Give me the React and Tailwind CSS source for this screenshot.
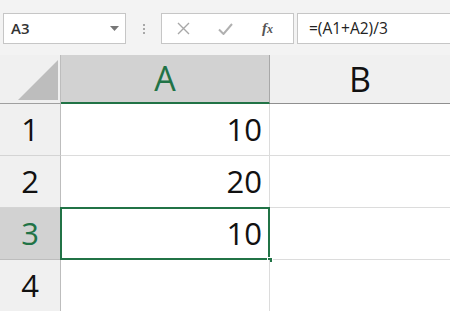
const rows = [
  { n: 1, a: '10' },
  { n: 2, a: '20' },
  { n: 3, a: '10', selected: true },
  { n: 4, a: '' },
];

export default function App() {
  return (
    <div className="w-[450px] h-[311px] overflow-hidden bg-[#f3f3f3] flex flex-col" style={{ fontFamily: '"Open Sans", "Noto Sans", sans-serif' }}>
      {/* formula bar */}
      <div className="h-[55px] flex items-start pt-[13px] pl-[3px] shrink-0">
        <div className="w-[123px] h-[31px] bg-white border border-[#c6c6c6] flex items-center pl-[7px] pr-[6px]">
          <span className="flex-1 text-[15px] font-semibold text-[#333]">A3</span>
          <svg width="9" height="5" viewBox="0 0 9 5"><path d="M0 0h9L4.5 5z" fill="#777" /></svg>
        </div>
        <div className="w-[35px] flex flex-col items-center justify-center h-[31px] gap-[2px]">
          <span className="w-[2px] h-[2px] bg-[#a8a8a8]" />
          <span className="w-[2px] h-[2px] bg-[#a8a8a8]" />
          <span className="w-[2px] h-[2px] bg-[#a8a8a8]" />
        </div>
        <div className="w-[133px] h-[31px] bg-white border border-[#c6c6c6] flex items-center pl-[15px]">
          <svg width="13" height="13" viewBox="0 0 13 13"><path d="M1 1l11 11M12 1L1 12" stroke="#a8a8a8" strokeWidth="1.4" /></svg>
          <svg className="ml-[28px]" width="15" height="12" viewBox="0 0 15 12"><path d="M1 6.5l4.5 4.5 8.5-10" stroke="#b0b0b0" strokeWidth="2" fill="none" /></svg>
          <span className="ml-[29px] text-[15px] italic font-semibold text-[#555]" style={{ fontFamily: '"Liberation Serif", serif' }}>f<span className="text-[12px]">x</span></span>
        </div>
        <div className="flex-1 h-[31px] bg-white border border-[#c6c6c6] border-r-0 ml-[3px] flex items-center pl-[11px] text-[15.5px] text-[#222]">
          =(A1+A2)/3
        </div>
      </div>

      {/* header row */}
      <div className="flex h-[49px] shrink-0">
        <div className="w-[61px] bg-[#f0f0f0] border-r border-[#bdbdbd] border-b border-b-[#a0a0a0] relative">
          <svg className="absolute left-[18px] top-[5px]" width="40" height="40" viewBox="0 0 40 40"><path d="M40 0V40H0z" fill="#bdbdbd" /></svg>
        </div>
        <div className="w-[209px] bg-[#d2d2d2] border-r border-[#a8a8a8] border-b-2 border-b-[#217346] flex items-center justify-center text-[34px] text-[#217346]">
          A
        </div>
        <div className="flex-1 bg-[#f0f0f0] border-b border-[#8f8f8f] flex items-center justify-center text-[34px] text-[#111]">
          B
        </div>
      </div>

      {rows.map((r) => (
        <div key={r.n} className="flex h-[52px] shrink-0">
          <div
            className={
              r.selected
                ? 'w-[61px] bg-[#d2d2d2] border-r border-[#a8a8a8] border-b border-b-[#bdbdbd] flex items-center justify-center text-[31px] text-[#217346]'
                : 'w-[61px] bg-[#f0f0f0] border-r border-[#bdbdbd] border-b border-b-[#d4d4d4] flex items-center justify-center text-[31px] text-[#111]'
            }
          >
            {r.n}
          </div>
          <div className="w-[209px] bg-white border-r border-b border-[#dcdcdc] relative flex items-center justify-end pr-[7px] text-[31px] text-[#111]">
            {r.a}
            {r.selected && (
              <>
                <div className="absolute left-[-1px] top-[-1px] right-[-1px] bottom-[-1px] border-2 border-[#217346]" />
                <div className="absolute right-[-4px] bottom-[-4px] w-[6px] h-[6px] bg-[#217346] border border-white" />
              </>
            )}
          </div>
          <div className="flex-1 bg-white border-b border-[#dcdcdc]" />
        </div>
      ))}
    </div>
  );
}
